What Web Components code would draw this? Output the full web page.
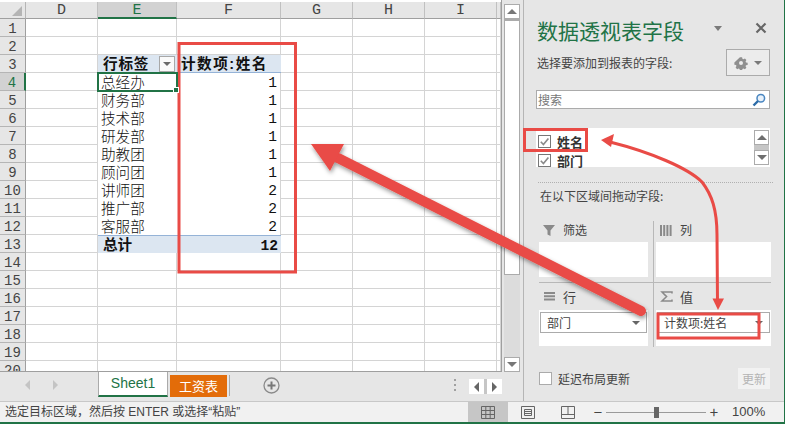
<!DOCTYPE html>
<html lang="zh">
<head>
<meta charset="utf-8">
<title>数据透视表字段</title>
<style>
html, body { margin: 0; padding: 0; background: #fff; overflow: hidden; }
body { font-family: "Noto Sans CJK SC", "Liberation Sans", sans-serif; }
</style>
</head>
<body>
<excel-window>
  <work-sheet slot="sheet"></work-sheet>
  <sheet-tabs slot="tabs"></sheet-tabs>
  <pivot-panel slot="panel"></pivot-panel>
  <status-bar slot="status"></status-bar>
  <callout-layer slot="overlay"></callout-layer>
</excel-window>

<script>
const CJK = `"Noto Sans CJK SC", "Liberation Sans", sans-serif`;
const TIGHT = `"Liberation Sans", "Noto Sans CJK SC", sans-serif`;

class ExcelWindow extends HTMLElement {
  constructor() {
    super();
    this.attachShadow({ mode: "open" });
  }
  connectedCallback() {
    this.shadowRoot.innerHTML = `
    <style>
      :host { display: block; position: relative; width: 785px; height: 424px; box-sizing: border-box;
        border-right: 1px solid #217346; font-family: ${CJK}; }
      .top { display: flex; height: 401px; background: #e6e6e6; }
      .left { display: flex; flex-direction: column; width: 523px; flex: none; }
      .bottom { border-bottom: 2px solid #217346; }
    </style>
    <div class="top">
      <div class="left"><slot name="sheet"></slot><slot name="tabs"></slot></div>
      <slot name="panel"></slot>
    </div>
    <div class="bottom"><slot name="status"></slot></div>
    <slot name="overlay"></slot>`;
  }
}

class WorkSheet extends HTMLElement {
  constructor() {
    super();
    this.attachShadow({ mode: "open" });
    this.rows = [["总经办",1],["财务部",1],["技术部",1],["研发部",1],["助教团",1],["顾问团",1],["讲师团",2],["推广部",2],["客服部",2]];
  }
  getCells() {
    const cols = ["D","E","F","G","H","I",""];
    let html = `<div class="corner"><i></i></div>`;
    cols.forEach(c => { html += `<div class="col${c === "E" ? " on" : ""}">${c}</div>`; });
    for (let r = 1; r <= 20; r++) {
      html += `<div class="rowh${r === 4 ? " on" : ""}">${r}</div>`;
      cols.forEach(c => {
        let cls = "cell", text = "", extra = "";
        if (c === "E" || c === "F") {
          if (r === 3) {
            cls += " head";
            text = c === "E" ? "行标签" : "计数项:姓名";
            if (c === "E") extra = `<span class="filter"><i></i></span>`;
          } else if (r === 13) {
            cls += " total";
            text = c === "E" ? "总计" : "12";
          } else if (r > 3 && r < 13) {
            cls += " body";
            text = c === "E" ? this.rows[r - 4][0] : this.rows[r - 4][1];
          }
          if (c === "F" && r > 3 && r < 14) cls += " num";
          if (c === "F" && r === 3) cls += " fhead";
          if (c === "E" && r === 4) cls += " active";
        }
        html += `<div class="${cls} c${c}">${text}${extra}</div>`;
      });
    }
    return html;
  }
  connectedCallback() {
    this.shadowRoot.innerHTML = `
    <style>
      :host { display: flex; height: 372px; flex: none; background: #e6e6e6; overflow: hidden; }
      .wrap { width: 502px; flex: none; height: 372px; box-sizing: border-box; padding-top: 2px; background: #fff; overflow: hidden;
        border-right: 1px solid #9f9f9f; border-bottom: 1px solid #9f9f9f; }
      .grid { display: grid; grid-template-columns: 26px 72px 79px 104px 72px 72px 72px 4px; grid-template-rows: 17px repeat(20, 18px); }
      .corner { background: #e6e6e6; border-right: 1px solid #b5b5b5; border-bottom: 1px solid #9f9f9f; position: relative; box-sizing: border-box; }
      .corner i { position: absolute; right: 3px; bottom: 2px; width: 0; height: 0; border-style: solid; border-width: 0 0 10px 10px; border-color: transparent transparent #b4b4b4 transparent; }
      .col { background: #e6e6e6; border-right: 1px solid #c0c0c0; border-bottom: 1px solid #9f9f9f; box-sizing: border-box; text-align: center;
        font: 15px/18px "Liberation Mono", monospace; color: #444; }
      .col.on { background: #d2d2d2; color: #217346; border-bottom: 2px solid #217346; }
      .rowh { background: #e6e6e6; border-right: 1px solid #9f9f9f; border-bottom: 1px solid #b5b5b5; box-sizing: border-box; text-align: center;
        font: 14px/21px "Liberation Mono", monospace; color: #444; }
      .rowh.on { background: #d2d2d2; color: #217346; border-right: 2px solid #217346; }
      .cell { border-right: 1px solid #d4d4d4; border-bottom: 1px solid #d4d4d4; box-sizing: border-box; position: relative;
        font: 300 14.6px/20px ${TIGHT}; color: #111; padding-left: 3px; white-space: nowrap; }
      .body { border-bottom: 0; }
      .cE.body { border-right: 0; }
      .head { background: #dce6f1; font-weight: 700; border-right: 0; border-bottom: 1px solid #95b3d7; padding-left: 5px; letter-spacing: .8px; line-height: 19px; }
      .fhead { padding-left: 4px; letter-spacing: 1.5px; }
      .total { background: #dce6f1; font-weight: 700; border-right: 0; border-top: 1px solid #95b3d7; border-bottom: 0; padding-left: 5px; line-height: 19px; }
      .num { text-align: right; padding: 0 3px 0 0; font-family: "Liberation Mono", monospace; font-size: 14.6px; line-height: 21px; }
      .active { outline: 2px solid #217346; outline-offset: -1px; z-index: 1; }
      .active::after { content: ""; position: absolute; right: -2px; bottom: -2px; width: 4px; height: 4px; background: #217346; border: 1px solid #fff; }
      .filter { position: absolute; right: 2px; top: 1px; width: 14px; height: 14px; background: #fafafa; border: 1px solid #a8a8a8; display: flex; align-items: center; justify-content: center; }
      .filter i { width: 0; height: 0; border-style: solid; border-width: 4px 4px 0 4px; border-color: #6a6a6a transparent transparent transparent; }
    </style>
    <div class="wrap"><div class="grid">${this.getCells()}</div></div>
    <v-scroll></v-scroll>`;
  }
}

class VScroll extends HTMLElement {
  constructor() {
    super();
    this.attachShadow({ mode: "open" });
  }
  connectedCallback() {
    this.shadowRoot.innerHTML = `
    <style>
      :host { display: flex; flex-direction: column; width: 16px; height: 372px; margin: 0 3px 0 2px; padding-top: 4px; box-sizing: border-box; background: #e6e6e6; }
      .btn { height: 15px; flex: none; box-sizing: border-box; background: #fff; border: 1px solid #ababab; display: flex; align-items: center; justify-content: center; }
      .up { width: 0; height: 0; border-style: solid; border-width: 0 5px 5px 5px; border-color: transparent transparent #777 transparent; }
      .down { width: 0; height: 0; border-style: solid; border-width: 5px 5px 0 5px; border-color: #777 transparent transparent transparent; }
      .thumb { height: 256px; flex: none; box-sizing: border-box; background: #fff; border: 1px solid #ababab; border-top-width: 2px; }
      .track { flex: 1; background: #dcdcdc; }
    </style>
    <div class="btn"><i class="up"></i></div>
    <div class="thumb"></div>
    <div class="track"></div>
    <div class="btn"><i class="down"></i></div>`;
  }
}

class SheetTabs extends HTMLElement {
  constructor() {
    super();
    this.attachShadow({ mode: "open" });
  }
  connectedCallback() {
    this.shadowRoot.innerHTML = `
    <style>
      :host { display: flex; align-items: flex-start; height: 29px; flex: none; background: #e6e6e6; font-family: ${CJK}; }
      .nav { width: 98px; height: 26px; flex: none; display: flex; align-items: center; gap: 23px; padding-left: 25px; box-sizing: border-box; }
      .nav i { width: 0; height: 0; border-style: solid; border-width: 5px 5px 5px 0; border-color: transparent #c4c4c4 transparent transparent; }
      .nav i + i { border-width: 5px 0 5px 5px; border-color: transparent transparent transparent #c4c4c4; }
      .sheet { width: 70px; height: 25px; flex: none; box-sizing: border-box; background: #fff; border-left: 1px solid #aaa; border-right: 1px solid #aaa; border-bottom: 2px solid #217346;
        color: #217346; font: 14px/22px "Liberation Sans", sans-serif; text-align: center; }
      .orange { width: 57px; height: 22px; flex: none; margin: 3px 0 0 2px; background: #e36c09; color: #fff; font-size: 13px; line-height: 21px; text-align: center; }
      .sep { width: 1px; height: 21px; background: #aaa; margin: 3px 0 0 2px; flex: none; }
      .plus { margin: 5px 0 0 33px; width: 17px; height: 17px; flex: none; display: block; }
      .dots { margin: 7px 0 0 174px; width: 2px; height: 14px; flex: none; display: flex; flex-direction: column; gap: 3px; }
      .dots i { width: 2px; height: 2px; background: #a0a0a0; }
      .arrows { display: flex; margin: 7px 0 0 13px; flex: none; background: #c6c6c6; gap: 3px; }
      .arrows b { width: 15px; height: 15px; box-sizing: border-box; background: #fff; display: flex; align-items: center; justify-content: center; }
      .arrows i { width: 0; height: 0; border-style: solid; border-width: 5px 5px 5px 0; border-color: transparent #666 transparent transparent; }
      .arrows b + b i { border-width: 5px 0 5px 5px; border-color: transparent transparent transparent #666; }
    </style>
    <div class="nav"><i></i><i></i></div>
    <div class="sheet">Sheet1</div>
    <div class="orange">工资表</div>
    <div class="sep"></div>
    <svg class="plus" viewBox="0 0 17 17"><circle cx="8.5" cy="8.5" r="7.5" fill="none" stroke="#8a8a8a" stroke-width="1.3"/><path d="M4.5 8.5h8M8.5 4.5v8" stroke="#777" stroke-width="2"/></svg>
    <div class="dots"><i></i><i></i><i></i></div>
    <div class="arrows"><b><i></i></b><b><i></i></b></div>`;
  }
}

class PivotPanel extends HTMLElement {
  constructor() {
    super();
    this.attachShadow({ mode: "open" });
  }
  getStyles() {
    return `
    <style>
      :host { display: block; flex: 1; box-sizing: border-box; height: 401px; padding-left: 13px; border-left: 1px solid #b5b5b5; background: #e6e6e6; color: #444; font: 12px/16px ${CJK}; }
      .title { display: flex; align-items: center; height: 49px; padding-top: 11px; box-sizing: border-box; }
      h1 { margin: 0; font: 400 21px/26px ${CJK}; color: #217346; width: 147px; white-space: nowrap; }
      .caret { width: 0; height: 0; border-style: solid; border-width: 5px 4.5px 0 4.5px; border-color: #7a7a7a transparent transparent transparent; margin: 0 0 4px 30px; }
      .close { margin: 0 0 4px 33px; width: 12px; height: 12px; display: block; }
      .pick { display: flex; justify-content: space-between; align-items: center; height: 27px; margin-right: 14px; }
      .gear { width: 44px; height: 27px; box-sizing: border-box; border: 1px solid #ababab; background: #ececec; display: flex; align-items: center; justify-content: center; gap: 6px; }
      .gear i { width: 0; height: 0; border-style: solid; border-width: 4px 4px 0 4px; border-color: #7a7a7a transparent transparent transparent; }
      .search { display: flex; justify-content: space-between; align-items: center; height: 19px; margin: 14px 14px 0 -1px; padding: 0 3px 0 1px; box-sizing: border-box; background: #fff; border: 1px solid #ababab; color: #777; }
      .fields { position: relative; height: 39px; margin: 19px 14px 0 -1px; background: #fff; padding: 4px 0 0 2px; box-sizing: border-box; }
      .field { display: flex; align-items: center; gap: 6px; height: 19px; font-weight: 700; font-size: 13px; color: #333; }
      .check { width: 13px; height: 13px; flex: none; display: block; }
      .updown { position: absolute; right: 1px; top: 2px; width: 15px; height: 35px; display: flex; flex-direction: column; background: #c6c6c6; }
      .updown b { height: 15px; box-sizing: border-box; background: #fff; border: 1px solid #ababab; display: flex; align-items: center; justify-content: center; }
      .updown b + b { margin-top: 5px; }
      .updown i { width: 0; height: 0; border-style: solid; border-width: 0 5px 5px 5px; border-color: transparent transparent #6e6e6e transparent; }
      .updown b + b i { border-width: 5px 5px 0 5px; border-color: #6e6e6e transparent transparent transparent; }
      .dotted { border-top: 1px dotted #b0b0b0; margin: 15px 11px 0 1px; }
      .drag { margin: 5px 0 0 3px; height: 16px; }
      .areas { display: grid; grid-template-columns: 115px 117px; grid-template-rows: 62px 64px; margin: 17px 0 0 2px; width: 232px; }
      .area { box-sizing: border-box; }
      .area.l { border-right: 1px solid #b8b8b8; padding-right: 5px; }
      .area.r { padding-left: 2px; }
      .area.t { border-bottom: 1px solid #b8b8b8; }
      .area-head { display: flex; align-items: center; gap: 7px; height: 21px; padding: 0 0 3px 4px; box-sizing: border-box; font-size: 12px; }
      .area.b .area-head { height: 27px; font-size: 13px; padding-bottom: 0; }
      .area-head svg { width: 13px; height: 13px; flex: none; display: block; }
      .box { background: #fff; height: 35px; box-sizing: border-box; }
      .area.b .box { height: 36px; padding: 2px 1px 0; }
      .select { display: flex; justify-content: space-between; align-items: center; height: 21px; box-sizing: border-box; border: 1px solid #ababab; padding: 0 6px; background: #fff; color: #444; }
      .select i { width: 0; height: 0; border-style: solid; border-width: 4px 4px 0 4px; border-color: #666 transparent transparent transparent; }
      .foot { display: flex; align-items: center; height: 21px; margin: 21px 14px 0 2px; gap: 6px; }
      .foot .cb { width: 13px; height: 13px; box-sizing: border-box; background: #fff; border: 1px solid #ababab; flex: none; }
      .foot .update { margin-left: auto; width: 32px; height: 21px; background: #f2f2f2; color: #b4b4b4; text-align: center; line-height: 21px; }
    </style>`;
  }
  getCheck() {
    return `<svg class="check" viewBox="0 0 13 13"><rect x=".5" y=".5" width="12" height="12" fill="#fff" stroke="#777"/><path d="M2.8 6.8 5.4 9.6 10.4 3.4" fill="none" stroke="#8a8a8a" stroke-width="1.6"/></svg>`;
  }
  connectedCallback() {
    this.shadowRoot.innerHTML = `${this.getStyles()}
    <div class="title">
      <h1>数据透视表字段</h1>
      <i class="caret"></i>
      <svg class="close" viewBox="0 0 12 12"><path d="M1.5 1.5 10.5 10.5M10.5 1.5 1.5 10.5" stroke="#666" stroke-width="2.2"/></svg>
    </div>
    <div class="pick">
      <span>选择要添加到报表的字段:</span>
      <div class="gear">
        <svg width="14" height="14" viewBox="0 0 14 14"><path fill="#8f8f8f" fill-rule="evenodd" d="M5.7 0h2.6l.4 2 1.2.6 1.8-1 1.8 1.8-1 1.8.5 1.2 2 .4v2.6l-2 .4-.5 1.2 1 1.8-1.8 1.8-1.8-1-1.2.5-.4 2H5.7l-.4-2-1.2-.5-1.8 1L.5 12.5l1-1.8-.5-1.2-2-.4V6.5z M7 4.6a2.4 2.4 0 1 0 0 4.8 2.4 2.4 0 0 0 0-4.8z" transform="translate(1.2 1.2) scale(.83)"/></svg>
        <i></i>
      </div>
    </div>
    <div class="search">
      <span>搜索</span>
      <svg width="14" height="14" viewBox="0 0 14 14"><circle cx="8.8" cy="5.2" r="3.8" fill="#e8f1fa" stroke="#4a86c0" stroke-width="1.5"/><path d="M6 8 1.5 12.5" stroke="#2b6ca8" stroke-width="2.4"/></svg>
    </div>
    <div class="fields">
      <div class="field">${this.getCheck()}<span>姓名</span></div>
      <div class="field">${this.getCheck()}<span>部门</span></div>
      <div class="updown"><b><i></i></b><b><i></i></b></div>
    </div>
    <div class="dotted"></div>
    <div class="drag">在以下区域间拖动字段:</div>
    <div class="areas">
      <div class="area l t">
        <div class="area-head"><svg viewBox="0 0 13 13"><path fill="#8a8a8a" d="M0 1h12L7.5 6.5V12l-3-1.5v-4z"/></svg><span>筛选</span></div>
        <div class="box"></div>
      </div>
      <div class="area r t">
        <div class="area-head"><svg viewBox="0 0 13 13"><path fill="#8a8a8a" d="M0 1h2v11H0zM3.2 1h2v11h-2zM6.4 1h2v11h-2zM9.6 1h2v11h-2z"/></svg><span>列</span></div>
        <div class="box"></div>
      </div>
      <div class="area l b">
        <div class="area-head"><svg viewBox="0 0 13 13"><path fill="#8a8a8a" d="M1 2h11v2H1zM1 5.2h11v2H1zM1 8.4h11v2H1z"/></svg><span>行</span></div>
        <div class="box"><div class="select"><span>部门</span><i></i></div></div>
      </div>
      <div class="area r b">
        <div class="area-head"><svg viewBox="0 0 13 13"><path fill="none" stroke="#8a8a8a" stroke-width="1.5" d="M12 3.5V2H2l4.6 4.6L2 11h10V9.5"/></svg><span>值</span></div>
        <div class="box"><div class="select"><span>计数项:姓名</span><i></i></div></div>
      </div>
    </div>
    <div class="foot"><span class="cb"></span><span>延迟布局更新</span><span class="update">更新</span></div>`;
  }
}

class StatusBar extends HTMLElement {
  constructor() {
    super();
    this.attachShadow({ mode: "open" });
  }
  connectedCallback() {
    this.shadowRoot.innerHTML = `
    <style>
      :host { display: flex; align-items: stretch; height: 21px; box-sizing: border-box; background: #f1f1f1; border-top: 1px solid #c8c8c8; color: #444; font: 12px/20px ${CJK}; }
      .msg { width: 468px; flex: none; padding-left: 5px; box-sizing: border-box; white-space: nowrap; font-family: ${TIGHT}; }
      .view { width: 40px; flex: none; display: flex; align-items: center; justify-content: center; }
      .view.on { background: #c6c6c6; }
      .view svg { display: block; }
      .zoom { display: flex; align-items: center; flex: none; padding-left: 5px; }
      .zoom b { font-weight: 400; width: 10px; text-align: center; font-size: 15px; }
      .track { width: 100px; height: 1px; margin: 0 3px; background: #9a9a9a; position: relative; }
      .track i { position: absolute; left: 48px; top: -5px; width: 5px; height: 11px; background: #666; }
      .pct { margin-left: 13px; font: 13px/20px "Liberation Sans", sans-serif; }
    </style>
    <span class="msg">选定目标区域，然后按 ENTER 或选择“粘贴”</span>
    <span class="view on"><svg width="14" height="13" viewBox="0 0 14 13"><path fill="none" stroke="#666" d="M.5.5h13v12H.5zM.5 4.5h13M.5 8.5h13M4.8.5v12M9.2.5v12"/></svg></span>
    <span class="view"><svg width="14" height="13" viewBox="0 0 14 13"><path fill="none" stroke="#666" d="M.5.5h13v12H.5zM3.5 3.5h7v6h-7zM3.5 5.5h7M3.5 7.5h7"/></svg></span>
    <span class="view"><svg width="14" height="13" viewBox="0 0 14 13"><path fill="none" stroke="#666" d="M.5.5h13v12H.5zM.5 8.5h13M7 .5v8"/></svg></span>
    <span class="zoom"><b>−</b><span class="track"><i></i></span><b>+</b><span class="pct">100%</span></span>`;
  }
}

class CalloutLayer extends HTMLElement {
  constructor() {
    super();
    this.attachShadow({ mode: "open" });
  }
  connectedCallback() {
    this.shadowRoot.innerHTML = `
    <style>
      :host { position: absolute; left: 0; top: 0; width: 786px; height: 424px; pointer-events: none; }
      svg { display: block; }
    </style>
    <svg width="786" height="424" viewBox="0 0 786 424">
      <defs>
        <filter id="sh" x="-10%" y="-20%" width="120%" height="140%"><feDropShadow dx="1" dy="2.5" stdDeviation="2" flood-color="#000" flood-opacity=".4"/></filter>
      </defs>
      <g fill="none" stroke="#e94b46" stroke-width="3">
        <rect x="179" y="43.5" width="116.5" height="228.5"/>
        <rect x="524.5" y="129.5" width="62" height="21"/>
        <rect x="658" y="314" width="101" height="24"/>
        <path d="M610 142C650 152 688 168 702 182 712 195 717 210 717 235L717.5 302"/>
      </g>
      <g fill="#e94b46">
        <path d="M601 140 614 134 611 147z"/>
        <path d="M718 310 712.5 298.5H724z"/>
      </g>
      <g filter="url(#sh)">
        <path d="M338 158 641 311" stroke="#e94b46" stroke-width="10" stroke-linecap="round" fill="none"/>
        <path d="M311 144H344L330 171z" fill="#e94b46"/>
      </g>
    </svg>`;
  }
}

customElements.define("excel-window", ExcelWindow);
customElements.define("work-sheet", WorkSheet);
customElements.define("v-scroll", VScroll);
customElements.define("sheet-tabs", SheetTabs);
customElements.define("pivot-panel", PivotPanel);
customElements.define("status-bar", StatusBar);
customElements.define("callout-layer", CalloutLayer);
</script>
</body>
</html>
